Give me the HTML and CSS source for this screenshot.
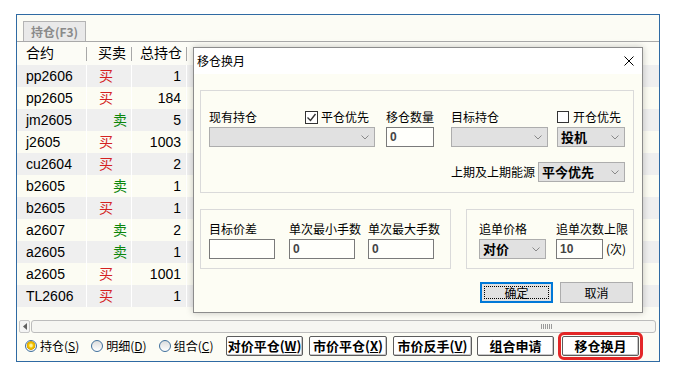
FILE: index.html
```html
<!DOCTYPE html>
<html lang="zh-CN">
<head>
    <meta charset="UTF-8">
    <meta name="viewport" content="width=device-width, initial-scale=1.0">
    <title>移仓换月</title>
    <link rel="stylesheet" href="styles.css">
</head>
<body>
<div class="window">
    <div class="tabs"><div class="tab">持仓(F3)</div></div>

    <div class="grid">
        <div class="row head">
            <div class="cell c1">合约</div>
            <div class="cell c2 hdir">买卖</div>
            <div class="cell c3">总持仓</div>
            <div class="cell rest"></div>
        </div>
        <div class="row"><div class="cell c1">pp2606</div><div class="cell c2 buy">买</div><div class="cell c3">1</div><div class="cell rest"></div></div>
        <div class="row"><div class="cell c1">pp2605</div><div class="cell c2 buy">买</div><div class="cell c3">184</div><div class="cell rest"></div></div>
        <div class="row"><div class="cell c1">jm2605</div><div class="cell c2 sell">卖</div><div class="cell c3">5</div><div class="cell rest"></div></div>
        <div class="row"><div class="cell c1">j2605</div><div class="cell c2 buy">买</div><div class="cell c3">1003</div><div class="cell rest"></div></div>
        <div class="row"><div class="cell c1">cu2604</div><div class="cell c2 buy">买</div><div class="cell c3">2</div><div class="cell rest"></div></div>
        <div class="row"><div class="cell c1">b2605</div><div class="cell c2 sell">卖</div><div class="cell c3">1</div><div class="cell rest"></div></div>
        <div class="row"><div class="cell c1">b2605</div><div class="cell c2 buy">买</div><div class="cell c3">1</div><div class="cell rest"></div></div>
        <div class="row"><div class="cell c1">a2607</div><div class="cell c2 sell">卖</div><div class="cell c3">2</div><div class="cell rest"></div></div>
        <div class="row"><div class="cell c1">a2605</div><div class="cell c2 sell">卖</div><div class="cell c3">1</div><div class="cell rest"></div></div>
        <div class="row"><div class="cell c1">a2605</div><div class="cell c2 buy">买</div><div class="cell c3">1001</div><div class="cell rest"></div></div>
        <div class="row"><div class="cell c1">TL2606</div><div class="cell c2 buy">买</div><div class="cell c3">1</div><div class="cell rest"></div></div>
    </div>

    <div class="hscroll">
        <div class="arrow"><svg width="4" height="7"><path d="M4 0 L0 3.5 L4 7 Z" fill="#606060"/></svg></div>
        <div class="thumb"><span class="grip"></span></div>
    </div>

    <div class="toolbar">
        <div class="opts">
            <label class="opt"><span class="radio on"></span>持仓(<u>S</u>)</label>
            <label class="opt"><span class="radio"></span>明细(<u>D</u>)</label>
            <label class="opt"><span class="radio"></span>组合(<u>C</u>)</label>
        </div>
        <button class="tbtn w77">对价平仓(<u>W</u>)</button>
        <button class="tbtn w78">市价平仓(<u>X</u>)</button>
        <button class="tbtn w79">市价反手(<u>V</u>)</button>
        <button class="tbtn w77 gap5">组合申请</button>
        <button class="tbtn w77 gap8 marked">移仓换月</button>
    </div>

    <div class="dialog">
        <div class="dlg-title">
            <span>移仓换月</span>
            <svg width="10" height="10"><path d="M0.5 0.5 L9.5 9.5 M9.5 0.5 L0.5 9.5" stroke="#000" stroke-width="1"/></svg>
        </div>
        <div class="dlg-body">
            <div class="group g1">
                <div class="frow">
                    <div class="field fa">
                        <div class="lbl">现有持仓
                            <span class="chk-wrap"><span class="check"><svg width="11" height="11"><path d="M1.5 5.5 L4.5 8.5 L9.5 2" stroke="#333" stroke-width="1.4" fill="none"/></svg></span>平仓优先</span>
                        </div>
                        <div class="combo"><span></span><svg width="8" height="5"><polyline points="0.5,0.5 4,4 7.5,0.5" stroke="#888" fill="none"/></svg></div>
                    </div>
                    <div class="field fb">
                        <div class="lbl">移仓数量</div>
                        <div class="input">0</div>
                    </div>
                    <div class="field fc">
                        <div class="lbl">目标持仓</div>
                        <div class="combo"><span></span><svg width="8" height="5"><polyline points="0.5,0.5 4,4 7.5,0.5" stroke="#888" fill="none"/></svg></div>
                    </div>
                    <div class="field fd">
                        <div class="lbl"><span class="check small"></span>开仓优先</div>
                        <div class="combo"><span>投机</span><svg width="8" height="5"><polyline points="0.5,0.5 4,4 7.5,0.5" stroke="#888" fill="none"/></svg></div>
                    </div>
                </div>
                <div class="frow2">
                    <span>上期及上期能源</span>
                    <div class="combo w87"><span>平今优先</span><svg width="8" height="5"><polyline points="0.5,0.5 4,4 7.5,0.5" stroke="#888" fill="none"/></svg></div>
                </div>
            </div>

            <div class="groups">
                <div class="group g2">
                    <div class="field f66 mr14">
                        <div class="lbl">目标价差</div>
                        <div class="input"></div>
                    </div>
                    <div class="field f66 mr13">
                        <div class="lbl">单次最小手数</div>
                        <div class="input">0</div>
                    </div>
                    <div class="field f66">
                        <div class="lbl">单次最大手数</div>
                        <div class="input">0</div>
                    </div>
                </div>
                <div class="group g3">
                    <div class="field f67">
                        <div class="lbl">追单价格</div>
                        <div class="combo"><span>对价</span><svg width="8" height="5"><polyline points="0.5,0.5 4,4 7.5,0.5" stroke="#888" fill="none"/></svg></div>
                    </div>
                    <div class="field">
                        <div class="lbl">追单次数上限</div>
                        <div class="irow"><div class="input w47">10</div><span class="unit">(次)</span></div>
                    </div>
                </div>
            </div>

            <div class="dlg-btns">
                <button class="dbtn default">确定</button>
                <button class="dbtn">取消</button>
            </div>
        </div>
    </div>
</div>
</body>
</html>
```

FILE: styles.css
```css
* { box-sizing: border-box; }
body {
    margin: 0;
    background: #fff;
    font-family: "Noto Sans CJK SC", sans-serif;
    font-size: 12px;
    color: #000;
}
.window {
    position: relative;
    margin: 14px 0 0 16px;
    width: 644px;
    height: 348px;
    border: 1px solid #2f6aa3;
    background: #fcfcf5;
    display: flex;
    flex-direction: column;
}

/* tab strip */
.tabs {
    height: 27px;
    padding: 6px 0 0 6px;
    border-bottom: 1px solid #a9a9a9;
    flex-shrink: 0;
}
.tab {
    width: 63px;
    height: 20px;
    border: 1px solid #b4b4b4;
    border-bottom: none;
    background: #e9e9e9;
    color: #8a8a8a;
    font-weight: bold;
    line-height: 19px;
    text-align: center;
}

/* position grid */
.grid { flex: 1; }
.row { display: flex; height: 22px; }
.row:nth-child(even) { background: #efefef; }
.row:nth-child(odd) { background: #fcfcf3; }
.row.head { height: 23px; background: #fcfcf6; }
.cell {
    font: 14px "Liberation Sans", "Noto Sans CJK SC", sans-serif;
    line-height: 22px;
    border-right: 1px solid #fff;
    white-space: nowrap;
}
.c1 { width: 70px; padding-left: 9px; }
.c2 { width: 45px; }
.c3 { width: 55px; text-align: right; padding-right: 5px; }
.rest { flex: 1; border-right: none; }
.head .cell {
    border-right: none;
    line-height: 23px;
    background: linear-gradient(#a8a8a8, #a8a8a8) right 5px / 1px 14px no-repeat;
}
.head .rest { background: none; }
.hdir { padding-left: 11px; }
.buy { color: #d42222; padding-left: 12px; }
.sell { color: #0b860b; padding-left: 26px; }

/* horizontal scrollbar */
.hscroll {
    height: 13px;
    display: flex;
    padding: 0 3px 0 2px;
    gap: 1px;
    flex-shrink: 0;
}
.arrow {
    width: 11px;
    border: 1px solid #c6c6c6;
    border-radius: 2px;
    display: flex;
    align-items: center;
    justify-content: center;
    background: #f4f4f4;
}
.thumb {
    flex: 1;
    border: 1px solid #bcbcbc;
    border-radius: 3px;
    background: #f6f6f2;
    display: flex;
    align-items: center;
    padding-left: 509px;
}
.grip {
    width: 11px;
    height: 5px;
    background: repeating-linear-gradient(90deg, #9a9a9a 0 1px, transparent 1px 2px);
}

/* bottom toolbar */
.toolbar {
    height: 28px;
    display: flex;
    align-items: center;
    padding: 0 0 3px 8px;
    flex-shrink: 0;
}
.opts { width: 201px; display: flex; }
.opt {
    display: flex;
    align-items: center;
    line-height: 16px;
    margin-right: 12px;
    white-space: nowrap;
}
.radio {
    width: 12px;
    height: 12px;
    border-radius: 50%;
    border: 1px solid #3f6f9c;
    background: linear-gradient(#dcdcdc, #fff);
    margin-right: 3px;
}
.radio.on {
    background: radial-gradient(circle at 50% 45%, #fff3a0 0 1px, #f2c400 2.5px, #e0a800 4px, #f4f4f4 4.6px);
}
.tbtn {
    height: 20px;
    margin-left: 6px;
    padding: 0;
    border: 1px solid #5c5c5c;
    border-radius: 2px;
    background: #fff;
    font: bold 13px "Noto Sans CJK SC", sans-serif;
    line-height: 17px;
    white-space: nowrap;
    box-shadow: inset -1px -1px 0 #c8c8c8;
}
.tbtn:first-of-type { margin-left: 0; }
.w77 { width: 77px; }
.w78 { width: 78px; }
.w79 { width: 79px; }
.gap5 { margin-left: 5px; }
.gap8 { margin-left: 8px; }
.marked { outline: 3px solid #e32626; outline-offset: 1px; }

/* dialog */
.dialog {
    position: absolute;
    left: 176px;
    top: 32px;
    width: 450px;
    height: 266px;
    border: 1px solid #8c8c8c;
    background: #fdfdf4;
    box-shadow: 0 0 7px rgba(0, 0, 0, 0.22);
}
.dlg-title {
    height: 26px;
    background: #fff;
    display: flex;
    align-items: center;
    justify-content: space-between;
    padding: 0 8px 0 3px;
    line-height: 16px;
}
.dlg-body { padding: 16px 8px 0 6px; }
.group { border: 1px solid #dadada; }
.g1 { height: 103px; padding: 18px 8px 9px 8px; }
.frow { display: flex; }
.field { display: flex; flex-direction: column; }
.lbl {
    height: 16px;
    line-height: 16px;
    margin-bottom: 2px;
    display: flex;
    align-items: center;
    white-space: nowrap;
}
.fa { width: 166px; margin-right: 11px; }
.fb { width: 48px; margin-right: 17px; }
.fc { width: 97px; margin-right: 9px; }
.fd { width: 68px; }
.chk-wrap { display: flex; align-items: center; margin-left: 48px; }
.check {
    width: 13px;
    height: 13px;
    border: 1px solid #333;
    background: #fff;
    margin-right: 3px;
    display: inline-flex;
    align-items: center;
    justify-content: center;
}
.check.small { width: 12px; height: 12px; margin-right: 4px; }
.combo {
    height: 20px;
    background: #e1e1e1;
    border: 1px solid #adadad;
    display: flex;
    align-items: center;
    justify-content: space-between;
    padding: 0 5px 0 3px;
    font-weight: bold;
    font-size: 13px;
    line-height: 16px;
}
.w87 { width: 87px; }
.input {
    height: 20px;
    border: 1px solid #7a7a7a;
    background: #fffffb;
    padding-left: 3px;
    font: bold 12px "Liberation Sans", sans-serif;
    color: #444;
    line-height: 18px;
}
.w47 { width: 47px; }
.frow2 {
    display: flex;
    justify-content: flex-end;
    align-items: center;
    gap: 3px;
    margin-top: 15px;
    line-height: 16px;
}
.groups { display: flex; gap: 15px; margin-top: 16px; }
.g2 { width: 251px; height: 60px; padding: 11px 0 0 8px; display: flex; }
.g3 { width: 168px; height: 60px; padding: 11px 0 0 12px; display: flex; }
.f66 { width: 66px; }
.f67 { width: 67px; margin-right: 10px; }
.mr14 { margin-right: 14px; }
.mr13 { margin-right: 13px; }
.irow { display: flex; align-items: center; }
.unit { margin-left: 3px; line-height: 16px; }
.dlg-btns {
    display: flex;
    justify-content: flex-end;
    gap: 7px;
    margin-top: 13px;
    padding-right: 1px;
}
.dbtn {
    width: 73px;
    height: 21px;
    padding: 0;
    background: #e1e1e1;
    border: 1px solid #adadad;
    font: 12px "Noto Sans CJK SC", sans-serif;
    line-height: 16px;
}
.dbtn.default {
    border: 2px solid #0078d7;
    outline: 1px dotted #000;
    outline-offset: -5px;
}
```
